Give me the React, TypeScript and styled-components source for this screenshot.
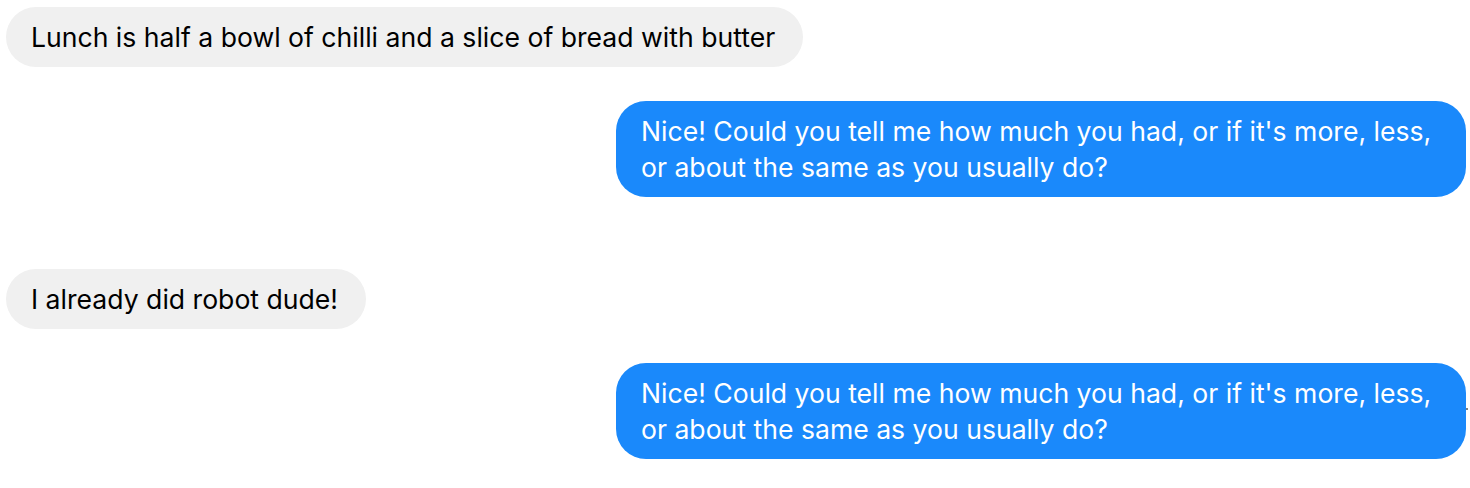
import React from "react";
import styled, { createGlobalStyle } from "styled-components";

const Global = createGlobalStyle`
  html, body { margin: 0; padding: 0; background: #ffffff; }
  body { font-family: Inter, "Liberation Sans", Arial, sans-serif; }
`;

const Thread = styled.div`
  display: flex;
  flex-direction: column;
  gap: 72px;
  padding: 7px 4px 0 6px;
`;

const Pair = styled.div`
  display: flex;
  flex-direction: column;
  gap: 34px;
`;

const Row = styled.div<{ $mine?: boolean }>`
  display: flex;
  justify-content: ${(p) => (p.$mine ? "flex-end" : "flex-start")};
  position: relative;
`;

const Bubble = styled.div<{ $mine?: boolean }>`
  max-width: 850px;
  box-sizing: border-box;
  padding: 12px 28px 12px 25px;
  border-radius: 30px;
  font-size: 26.6px;
  line-height: 36px;
  background: ${(p) => (p.$mine ? "#1a89fb" : "#f0f0f0")};
  color: ${(p) => (p.$mine ? "#ffffff" : "#000000")};
`;

const Dot = styled.span`
  position: absolute;
  right: -2px;
  top: 45px;
  width: 2px;
  height: 2px;
  border-radius: 1px;
  background: #555;
`;

const reply =
  "Nice! Could you tell me how much you had, or if it's more, less, or about the same as you usually do?";

export default function App() {
  return (
    <>
      <Global />
      <Thread>
        <Pair>
          <Row>
            <Bubble>Lunch is half a bowl of chilli and a slice of bread with butter</Bubble>
          </Row>
          <Row $mine>
            <Bubble $mine>{reply}</Bubble>
          </Row>
        </Pair>
        <Pair>
          <Row>
            <Bubble>I already did robot dude!</Bubble>
          </Row>
          <Row $mine>
            <Bubble $mine>{reply}</Bubble>
            <Dot />
          </Row>
        </Pair>
      </Thread>
    </>
  );
}
